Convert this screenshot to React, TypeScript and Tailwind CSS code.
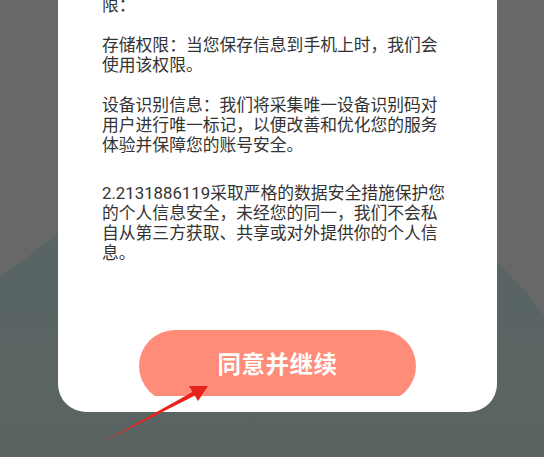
const paragraphs = [
  "存储权限：当您保存信息到手机上时，我们会使用该权限。",
  "设备识别信息：我们将采集唯一设备识别码对用户进行唯一标记，以便改善和优化您的服务体验并保障您的账号安全。",
];

const PrivacyDialog = () => {
  return (
    <div
      className="relative w-[544px] h-[457px] overflow-hidden bg-[#686868]"
      style={{ fontFamily: 'Roboto, "Noto Sans CJK SC", sans-serif' }}
    >
      {/* dimmed background hill */}
      <svg className="absolute inset-0" width="544" height="457" viewBox="0 0 544 457">
        <defs>
          <linearGradient id="hill" x1="0" y1="0" x2="0" y2="1">
            <stop offset="0" stopColor="#566665" />
            <stop offset="1" stopColor="#5b6463" />
          </linearGradient>
        </defs>
        <path
          d="M0,276 Q30,256 60,231 L60,100 L495,100 L495,261 Q522,284 544,316 L544,457 L0,457 Z"
          fill="url(#hill)"
        />
      </svg>

      <div className="relative z-10 ml-[58px] -mt-[5px] w-[439px] rounded-b-[28px] bg-white pl-[44px] pb-[16px]">
        <div className="w-[348px] text-[16.8px] leading-[20px] text-[#333333]">
          <p>限：</p>
          {paragraphs.map((text, i) => (
            <p key={i} className="mt-[20px]">
              {text}
            </p>
          ))}
          <p className="mt-[28px]">
            2.2131886119采取严格的数据安全措施保护您的个人信息安全，未经您的同一，我们不会私自从第三方获取、共享或对外提供你的个人信息。
          </p>
        </div>

        <div className="mt-[67px] ml-[37px] w-[277px] h-[66px] overflow-hidden">
          <button className="w-full h-[72px] rounded-full bg-[#ff8c78] text-white text-[23.5px] font-bold tracking-[0.5px]">
            同意并继续
          </button>
        </div>
      </div>

      {/* annotation arrow */}
      <svg className="absolute inset-0 z-20 pointer-events-none" width="544" height="457" viewBox="0 0 544 457">
        <path d="M103,442 L196,390 L198,394 Z" fill="#e8231c" />
        <path d="M208,386 L189,386 L198,401 Z" fill="#e8231c" />
      </svg>
    </div>
  );
};

export default function App() {
  return <PrivacyDialog />;
}
